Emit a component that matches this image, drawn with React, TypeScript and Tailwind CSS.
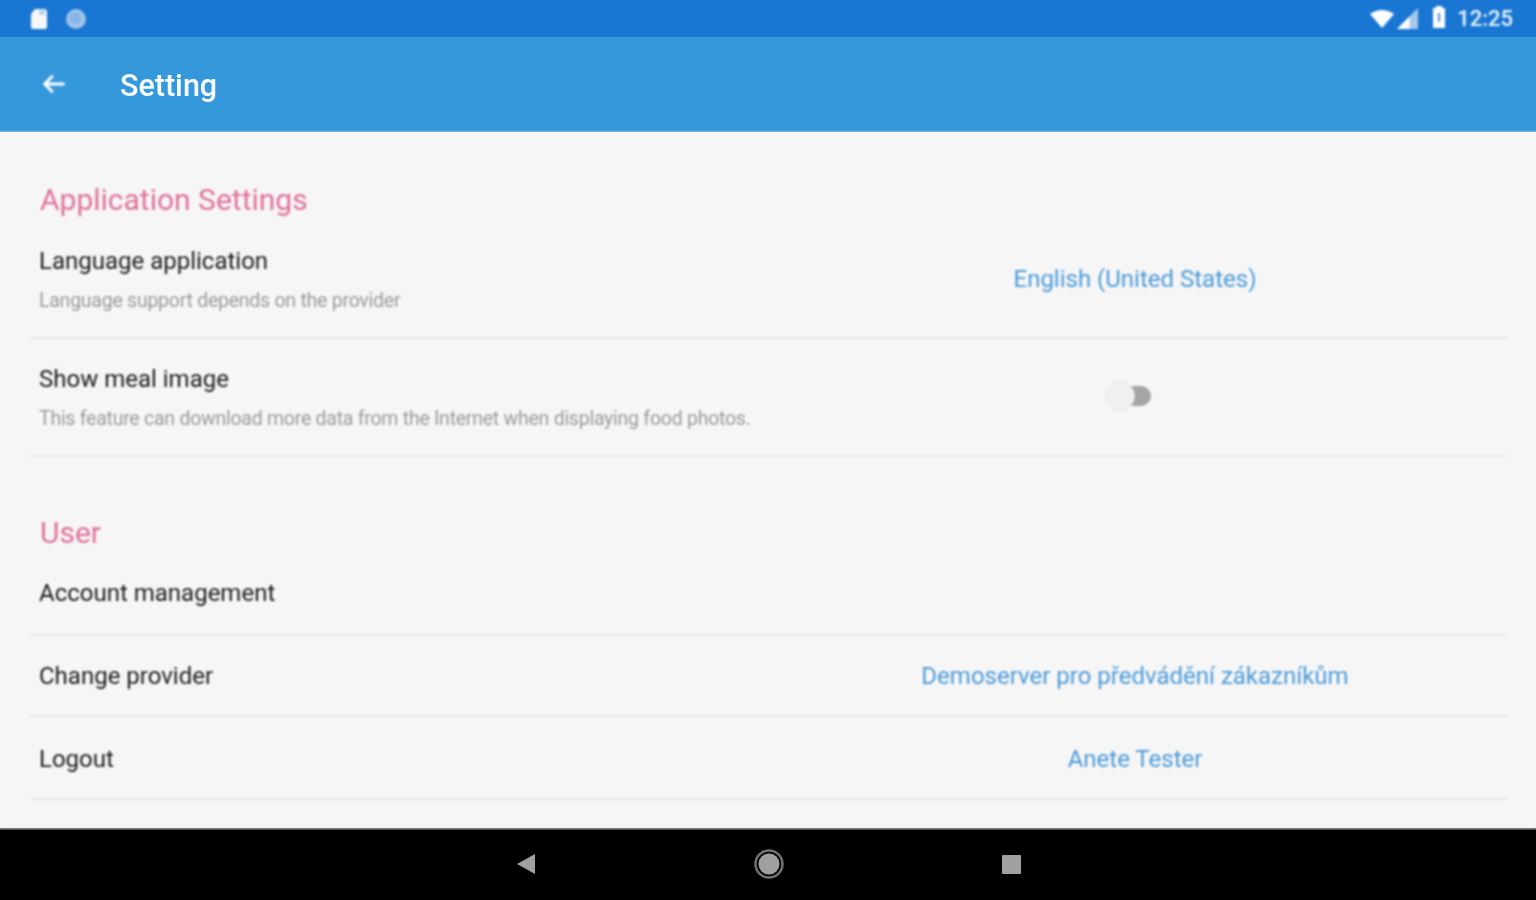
export default function App() {
  const font = { fontFamily: "Roboto, sans-serif" };
  return (
    <div style={font} className="w-[1536px] h-[900px] flex flex-col overflow-hidden bg-[#f6f6f6]">
      <div className="h-[37px] bg-[#1976d2] flex items-center justify-between pl-[30px] pr-[23px] shrink-0">
        <div className="flex items-center gap-[15px] blur-[0.8px]">
          <svg width="20" height="22" viewBox="0 0 20 22"><path d="M5 1h9a3 3 0 0 1 3 3v15a2 2 0 0 1-2 2H3a2 2 0 0 1-2-2V6z" fill="#f4f8fc" /><path d="M9 2h6v5H9z" fill="#bcd6f0" /></svg>
          <svg width="22" height="22" viewBox="0 0 22 22"><circle cx="11" cy="11" r="10" fill="#9dc3ec" /><circle cx="10" cy="10" r="6" fill="#8ab4e6" /></svg>
        </div>
        <div className="flex items-center blur-[0.8px]">
          <svg width="26" height="20" viewBox="0 0 26 20"><path d="M1 5 Q13 -3 25 5 L13 19z" fill="#fff" /></svg>
          <svg width="23" height="23" viewBox="0 0 22 22" className="ml-[1px]"><path d="M1 21 21 1v20z" fill="#a9c9ec" /><path d="M1 21 13 9v12z" fill="#fff" /></svg>
          <svg width="14" height="24" viewBox="0 0 14 24" className="ml-[13px] -mt-[4px]"><path d="M4 1h6v2h3v20H1V3h3z" fill="#fff" /><path d="M6 8h2v9H6z" fill="#4f93dc" /></svg>
          <span className="ml-[11px] text-[22px] leading-none font-medium text-[#eef5fc]">12:25</span>
        </div>
      </div>
      <div className="h-[95px] bg-[#3498db] flex items-center pl-[40px] shrink-0 border-b border-[#2f8ccb]">
        <svg width="28" height="28" viewBox="0 0 24 24" fill="none" stroke="#fff" strokeWidth="2.4" className="blur-[0.8px]"><path d="M21 12H4M11 5l-7 7 7 7" /></svg>
        <span className="ml-[52px] mt-[4px] text-[30.5px] leading-none font-medium text-[#f6fafe] blur-[0.7px]">Setting</span>
      </div>

      <main className="flex-1 bg-[#f6f6f6] pl-[30px] pr-[29px] blur-[0.9px]">
        <h2 className="pl-[10px] pt-[50px] text-[30px] leading-[36px] text-[#e0709a]">Application Settings</h2>
        <Row className="h-[121px] pt-[3px]" title="Language application" sub="Language support depends on the provider" value="English (United States)" />
        <div className="h-[118px] pt-[1px] border-b-2 border-[#e8e8e8] grid grid-cols-[733px_744px] items-center">
          <div className="pl-[9px]">
            <div className="text-[24px] leading-[32px] text-[#1c1c1c]">Show meal image</div>
            <div className="mt-[11px] text-[19.5px] leading-[26px] text-[#9a9a9a] tracking-[-0.25px]">This feature can download more data from the Internet when displaying food photos.</div>
          </div>
          <div className="flex justify-center">
            <div className="relative w-[46px] h-[32px] mr-[14px] -mt-[3px] flex items-center justify-end">
              <div className="w-[30px] h-[20px] rounded-full bg-[#a5a5a5]" />
              <div className="absolute left-0 top-[1px] w-[30px] h-[30px] rounded-full bg-[#f0f0f0] border border-[#e6e6e6]" />
            </div>
          </div>
        </div>
        <h2 className="pl-[10px] pt-[58px] text-[30px] leading-[36px] text-[#e0709a]">User</h2>
        <div className="h-[85px] pt-[1px] border-b-2 border-[#e8e8e8] flex items-center pl-[9px] text-[24px] text-[#1c1c1c]">Account management</div>
        <Row className="h-[81px]" title="Change provider" value="Demoserver pro předvádění zákazníkům" />
        <Row className="h-[83px] pt-[2px]" title="Logout" value="Anete Tester" />
      </main>

      <div className="h-[72px] bg-black border-t-2 border-[#444] flex items-center justify-center shrink-0">
        <div className="w-[505px] -mt-[2px] flex items-center justify-between blur-[0.7px]">
          <svg width="20" height="22" viewBox="0 0 20 22"><path d="M19 1v20L1 11z" fill="#a0a0a0" /></svg>
          <svg width="30" height="30" viewBox="0 0 30 30"><circle cx="15" cy="15" r="13.5" fill="none" stroke="#6f6f6f" strokeWidth="2.5" /><circle cx="15" cy="15" r="10.5" fill="#a0a0a0" /></svg>
          <div className="w-[19px] h-[19px] bg-[#a0a0a0] rounded-[1px]" />
        </div>
      </div>
    </div>
  );
}

function Row({ title, sub, value, className }: { title: string; sub?: string; value: string; className: string }) {
  return (
    <div className={"border-b-2 border-[#e8e8e8] grid grid-cols-[733px_744px] items-center " + className}>
      <div className="pl-[9px]">
        <div className="text-[24px] leading-[32px] text-[#1c1c1c]">{title}</div>
        {sub && <div className="mt-[11px] text-[19.5px] leading-[26px] text-[#9a9a9a] tracking-[-0.25px]">{sub}</div>}
      </div>
      <div className="text-center text-[24px] leading-[32px] text-[#4a9ada]">{value}</div>
    </div>
  );
}
